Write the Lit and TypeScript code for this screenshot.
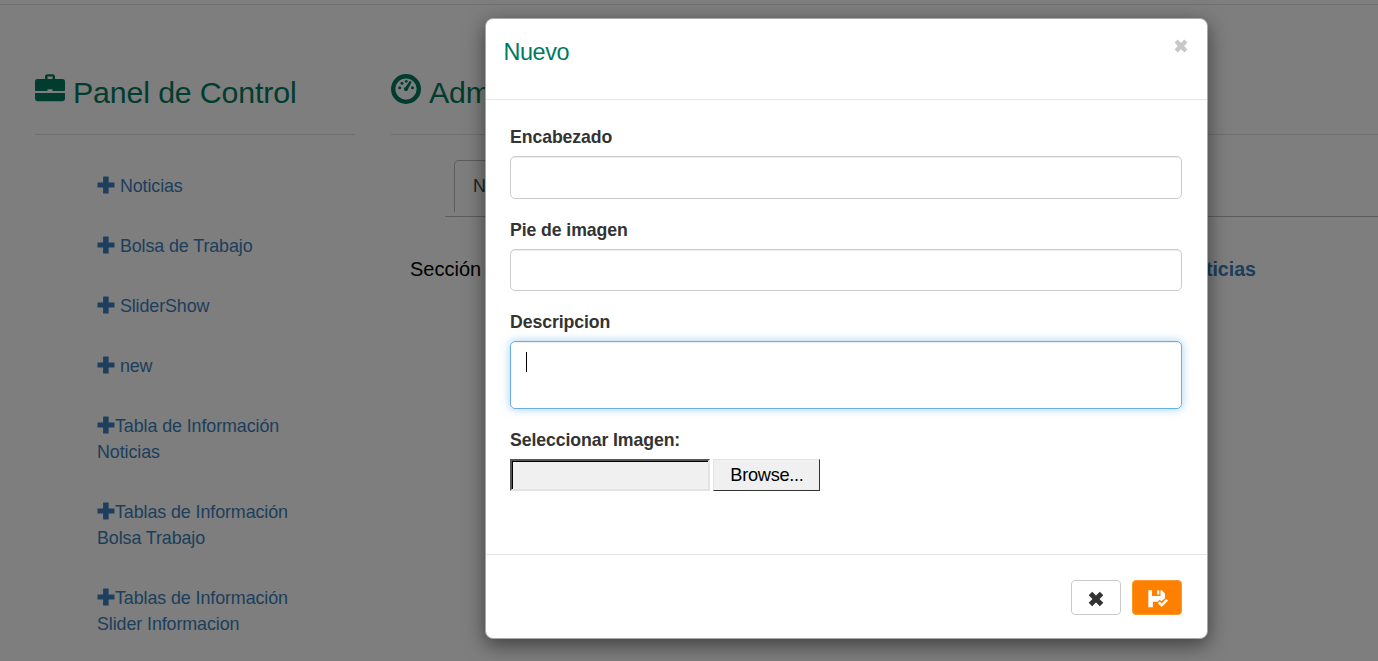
import { LitElement, html, svg, css } from "lit";
import { customElement } from "lit/decorators.js";

const icon = (name: string, size: number, body: unknown) =>
  html`<svg class="icon ${name}" width=${size} height=${size} viewBox="0 0 1200 1200" fill="currentColor" aria-hidden="true">${body}</svg>`;

const plus = svg`<path d="M430 40h320q25 0 25 25v365h365q25 0 25 25v290q0 25-25 25H775v365q0 25-25 25H430q-25 0-25-25V770H60q-25 0-25-25V455q0-25 25-25h345V65q0-25 25-25z"/>`;
const briefcase = svg`<path fill-rule="evenodd" d="M500 50h200q100 0 100 100v90h300q100 0 100 100v340q0 20-20 35H700v-65H500v65H20Q0 700 0 680V340q0-100 100-100h300v-90q0-100 100-100zm0 90v100h200V140zM0 800h1200v230q0 95-95 95H95q-95 0-95-95z"/>`;
const dashboard = svg`<path fill-rule="evenodd" d="M600 0a600 600 0 1 1 0 1200a600 600 0 1 1 0-1200zm0 175a425 425 0 1 0 0 850a425 425 0 1 0 0-850z"/><circle cx="345" cy="550" r="60"/><circle cx="440" cy="365" r="60"/><circle cx="610" cy="290" r="55"/><circle cx="860" cy="550" r="60"/><circle cx="600" cy="600" r="85"/><path d="M545 580l180-270q35-45 70-20t15 70L660 640z"/>`;
const remove = svg`<path d="M365 130l235 235 235-235q17-17 34 0l201 201q17 17 0 34L835 600l235 235q17 17 0 34l-201 201q-17 17-34 0L600 835l-235 235q-17 17-34 0L130 869q-17-17 0-34l235-235-235-235q-17-17 0-34l201-201q17-17 34 0z"/>`;
const saved = svg`<path d="M20 80h220v340h510V80h80l190 190v290L800 740 700 640 570 770H290v330H20z"/><path d="M550 80h130v250H550z"/><path d="M590 850l100-100 130 120 270-270 110 110-380 370z"/>`;

@customElement("app-root")
export class AppRoot extends LitElement {
  static styles = css`
    :host {
      display: block;
      font-family: "Liberation Sans", Arial, sans-serif;
      font-size: 17.9px;
      line-height: 26px;
      color: #333;
    }
    * { box-sizing: border-box; }
    .screen { position: relative; height: 661px; overflow: hidden; background: #fcfcfc; }
    .page { padding-top: 4px; }
    .row { display: flex; border-top: 1px solid #dedede; padding: 55px 0 0 35px; gap: 36px; }
    .side { width: 320px; flex: none; }
    .main { flex: 1; }
    h2 {
      margin: 0 0 22px; height: 75px; padding-top: 16px;
      border-bottom: 1px solid #dedede;
      font-size: 30.3px; font-weight: 400; line-height: 34px; color: #007a5e;
      letter-spacing: -0.13px;
      white-space: nowrap; display: flex; gap: 8px;
    }
    .icon { display: inline-block; flex: none; }
    .briefcase { margin-top: -3px; }
    .dashboard { margin-top: -2px; }
    ul { list-style: none; margin: -1px 0 0; padding: 0 0 0 62px; }
    li { padding: 17px 0; color: #3b7db8; width: 280px; letter-spacing: -0.1px; }
    li .icon { vertical-align: -2px; }
    .tabs { margin: 25px 0 0 54px; height: 57px; border-bottom: 1px solid #bbb; padding-left: 9px; }
    .tab { width: 140px; height: 52px; border: 1px solid #bbb; border-bottom: 0; border-radius: 5px 5px 0 0; padding: 12px 18px; color: #444; }
    .intro { display: flex; justify-content: space-between; margin: 39px 122px 0 19px; font-size: 20px; color: #000; }
    .intro b { color: #3b7db8; font-size: 19.6px; }
    .backdrop { position: absolute; inset: 0; background: rgba(0, 0, 0, 0.5); }
    .modal {
      position: absolute; left: 485px; top: 18px; width: 723px; height: 621px;
      display: flex; flex-direction: column;
      background: #fff; border: 1px solid #a8a8a8;
      border-radius: 8px; box-shadow: 0 6px 20px rgba(0, 0, 0, 0.5);
    }
    .head { height: 81px; flex: none; border-bottom: 1px solid #e5e5e5; padding: 17px 18px 0 17.5px; display: flex; justify-content: space-between; }
    .head h4 { margin: 0; font-size: 23.4px; font-weight: 400; line-height: 32px; color: #007a5e; letter-spacing: -0.4px; }
    .close { display: flex; color: #c8c8c8; margin-top: 2px; height: 17px; }
    .body { flex: 1; padding: 24px 25px 0 24px; }
    label { display: block; font-weight: 700; font-size: 17.7px; line-height: 26px; margin-bottom: 6px; letter-spacing: -0.1px; }
    .field { height: 43px; border: 1px solid #ccc; border-radius: 5px; box-shadow: inset 0 1px 1px rgba(0, 0, 0, 0.075); margin-bottom: 18px; }
    .field.second { height: 42px; }
    .area { height: 68px; border-color: #66afe9; box-shadow: inset 0 1px 1px rgba(0, 0, 0, 0.075), 0 0 10px rgba(102, 175, 233, 0.6); padding: 10px 15px; }
    .caret { width: 1px; height: 20px; background: #000; }
    .file { display: flex; gap: 3px; height: 32px; }
    .path { width: 200px; background: #f0f0f0; border: 2px solid; border-color: #555 #e3e3e3 #e3e3e3 #555; box-shadow: inset 1px 1px #000; }
    .browse { width: 107px; background: #f0f0f0; border: 1px solid; border-color: #e3e3e3 #333 #333 #e3e3e3; color: #000; font-size: 18.2px; line-height: 30px; text-align: center; letter-spacing: -0.28px; padding-left: 1px; }
    .foot { height: 84px; flex: none; border-top: 1px solid #e5e5e5; padding: 25px 25px 0; display: flex; justify-content: flex-end; gap: 11px; }
    .btn { width: 50px; height: 35px; border: 1px solid #ccc; border-radius: 4px; display: flex; align-items: center; justify-content: center; color: #333; }
    .save { background: #ff8000; border-color: #f99a2c; color: #fff; }
    .btn .icon { margin-top: 3px; }
    .btn .saved { margin: 2px 0 0 2px; }
  `;

  private links: [string, boolean, string?][] = [
    ["Noticias", true],
    ["Bolsa de Trabajo", true],
    ["SliderShow", true],
    ["new", true],
    ["Tabla de Información", false, "Noticias"],
    ["Tablas de Información", false, "Bolsa Trabajo"],
    ["Tablas de Información", false, "Slider Informacion"],
  ];

  render() {
    return html`<div class="screen">
      <div class="page">
        <div class="row">
          <nav class="side">
            <h2>${icon("briefcase", 30, briefcase)}<span>Panel de Control</span></h2>
            <ul>
              ${this.links.map(([text, gap, second]) => html`<li>${icon("plus", 18, plus)}${gap ? " " : ""}${text}${second ? html`<br />${second}` : ""}</li>`)}
            </ul>
          </nav>
          <main class="main">
            <h2>${icon("dashboard", 30, dashboard)}<span>Administrador</span></h2>
            <div class="tabs"><div class="tab">Noticias</div></div>
            <div class="intro"><span>Sección</span><b>Noticias</b></div>
          </main>
        </div>
      </div>
      <div class="backdrop"></div>
      <section class="modal" role="dialog">
        <div class="head"><h4>Nuevo</h4><span class="close">${icon("remove", 16, remove)}</span></div>
        <div class="body">
          <label>Encabezado</label>
          <div class="field"></div>
          <label>Pie de imagen</label>
          <div class="field second"></div>
          <label>Descripcion</label>
          <div class="field area"><div class="caret"></div></div>
          <label>Seleccionar Imagen:</label>
          <div class="file"><div class="path"></div><div class="browse">Browse...</div></div>
        </div>
        <div class="foot">
          <div class="btn">${icon("remove", 18, remove)}</div>
          <div class="btn save">${icon("saved", 20, saved)}</div>
        </div>
      </section>
    </div>`;
  }
}
